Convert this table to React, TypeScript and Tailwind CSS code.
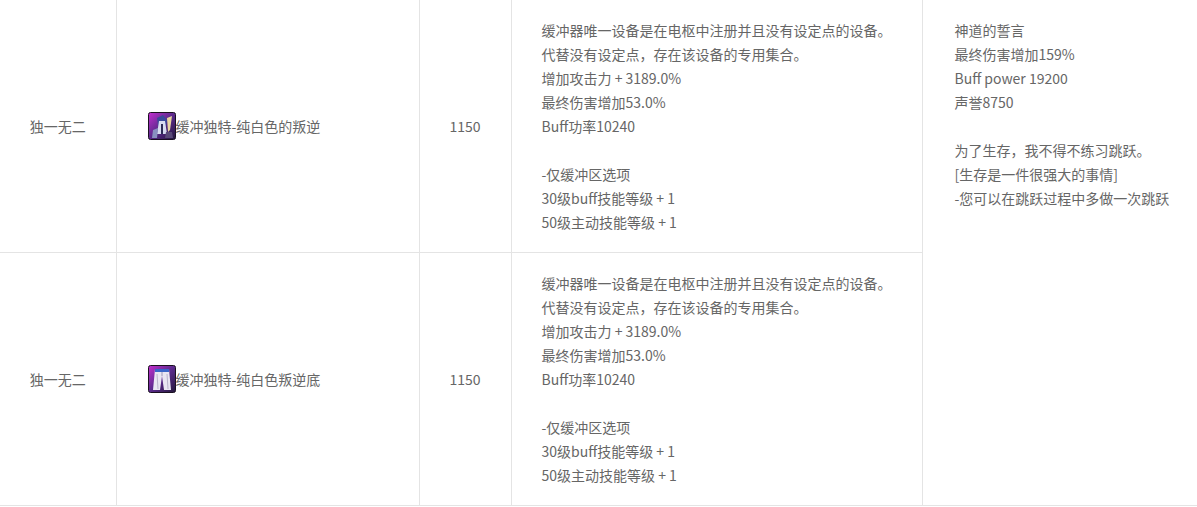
import React from "react"

type Item = {
  grade: string
  name: string
  level: string
  icon: "top" | "bottom"
}

const items: Item[] = [
  { grade: "独一无二", name: "缓冲独特-纯白色的叛逆", level: "1150", icon: "top" },
  { grade: "独一无二", name: "缓冲独特-纯白色叛逆底", level: "1150", icon: "bottom" },
]

const effectLines = [
  "缓冲器唯一设备是在电枢中注册并且没有设定点的设备。",
  "代替没有设定点，存在该设备的专用集合。",
  "增加攻击力 + 3189.0%",
  "最终伤害增加53.0%",
  "Buff功率10240",
  "",
  "-仅缓冲区选项",
  "30级buff技能等级 + 1",
  "50级主动技能等级 + 1",
]

const setLines = [
  "神道的誓言",
  "最终伤害增加159%",
  "Buff power 19200",
  "声誉8750",
  "",
  "为了生存，我不得不练习跳跃。",
  "[生存是一件很强大的事情]",
  "-您可以在跳跃过程中多做一次跳跃",
]

const ItemIcon = ({ kind }: { kind: "top" | "bottom" }) => (
  <svg width="28" height="28" viewBox="0 0 28 28" className="shrink-0">
    <defs>
      <linearGradient id={`bg-${kind}`} x1="0" y1="0" x2="1" y2="1">
        <stop offset="0" stopColor="#c42fd0" />
        <stop offset="0.5" stopColor="#5b2a8c" />
        <stop offset="1" stopColor="#24183a" />
      </linearGradient>
    </defs>
    <rect x="0.5" y="0.5" width="27" height="27" rx="2" fill={`url(#bg-${kind})`} stroke="#1a1020" />
    {kind === "top" ? (
      <g>
        <path d="M9 6 L15 3 L19 8 L18 14 L10 14 Z" fill="#3b4a9a" />
        <path d="M11 9 L17 9 L19 22 L9 22 Z" fill="#d8dcf0" />
        <path d="M13 12 L15 12 L15 22 L13 22 Z" fill="#2c2c55" />
        <path d="M19 6 L24 4 L22 18 L20 20 Z" fill="#e8d6a0" />
        <path d="M5 18 L10 16 L9 26 L4 26 Z" fill="#8890c0" />
        <path d="M18 20 L24 20 L25 26 L17 26 Z" fill="#5a4a78" />
      </g>
    ) : (
      <g>
        <path d="M7 4 L21 4 L23 25 L16 25 L14 11 L12 25 L5 25 Z" fill="#e9e6f2" />
        <path d="M7 4 L21 4 L21 7 L7 7 Z" fill="#3a66c8" />
        <path d="M14 7 L14 11" stroke="#9a98b8" strokeWidth="1" />
        <path d="M9 9 L10 24" stroke="#b8b4cc" strokeWidth="1" />
        <path d="M19 9 L20 24" stroke="#b8b4cc" strokeWidth="1" />
      </g>
    )}
  </svg>
)

const Lines = ({ lines }: { lines: string[] }) => (
  <div>
    {lines.map((l, i) => (
      <div key={i} className="h-6 whitespace-nowrap">
        {l}
      </div>
    ))}
  </div>
)

export default function App() {
  return (
    <div
      className="w-[1197px] h-[507px] overflow-hidden bg-white text-[14px] leading-6 text-[#666666]"
      style={{ fontFamily: '"Noto Sans CJK SC", "Noto Sans", sans-serif' }}
    >
      <table className="w-[1197px] table-fixed border-collapse">
        <colgroup>
          <col className="w-[116px]" />
          <col className="w-[303px]" />
          <col className="w-[92px]" />
          <col className="w-[411px]" />
          <col className="w-[275px]" />
        </colgroup>
        <tbody>
          {items.map((item, idx) => (
            <tr key={idx} className="border-b border-[#e4e4e4]">
              <td className="border-r border-[#e4e4e4] text-center align-middle">{item.grade}</td>
              <td className="border-r border-[#e4e4e4] pl-[31px] align-middle">
                <div className="flex items-center">
                  <ItemIcon kind={item.icon} />
                  <span>{item.name}</span>
                </div>
              </td>
              <td className="border-r border-[#e4e4e4] text-center align-middle">{item.level}</td>
              <td className="border-r border-[#e4e4e4] pl-[30px] py-[18px] align-top">
                <Lines lines={effectLines} />
              </td>
              {idx === 0 && (
                <td rowSpan={2} className="pl-[32px] pt-[18px] align-top">
                  <Lines lines={setLines} />
                </td>
              )}
            </tr>
          ))}
        </tbody>
      </table>
    </div>
  )
}
